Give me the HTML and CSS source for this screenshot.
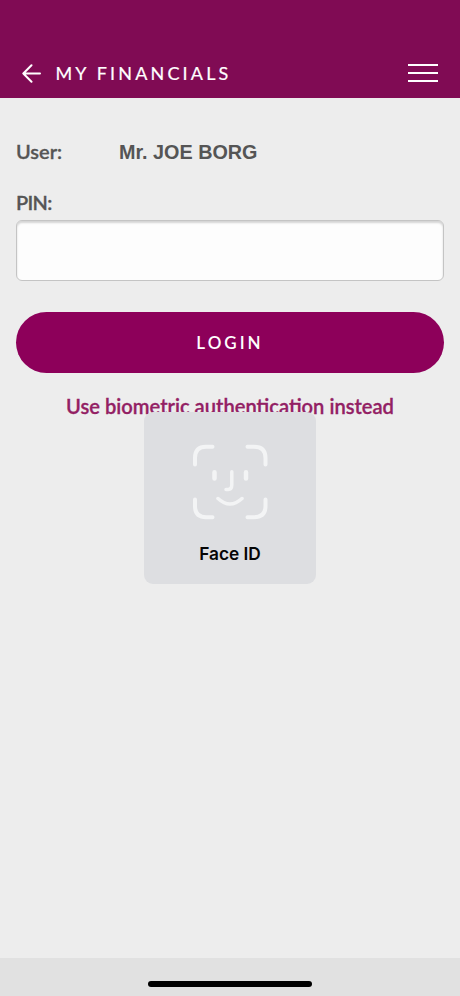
FILE: index.html
```html
<!DOCTYPE html>
<html lang="en">
<head>
<meta charset="utf-8">
<title>My Financials</title>
<link rel="stylesheet" href="styles.css">
</head>
<body>
<div class="screen">
  <header class="topbar">
    <svg class="back" width="20" height="20" viewBox="0 0 20 20"><path d="M9.500 2.300 1.300 10.500l8.200 8.200M1.300 10.500H18"/></svg>
    <h1 class="title">MY FINANCIALS</h1>
    <div class="menu"><i></i><i></i><i></i></div>
  </header>
  <main class="content">
    <div class="row"><span class="label">User:</span><span class="user">Mr. JOE BORG</span></div>
    <label class="label pin-label" for="pin">PIN:</label>
    <input class="pin" id="pin" type="password">
    <button class="login">LOGIN</button>
    <a class="biometric">Use biometric authentication instead</a>
  </main>
  <footer class="bottom"><div class="home"></div></footer>
  <div class="faceid">
    <svg width="76" height="76" viewBox="0 0 76 76">
      <path d="M3 20.500V14Q3 2.800 14 2.800h6.500M55.500 2.800H62Q73.500 2.800 73.500 14v6.500M73.500 55.500V62Q73.500 73.200 62 73.200h-6.500M20.500 73.200H14Q3 73.200 3 62v-6.500"/>
      <path class="eyes" d="M22.500 28.300v6.200M54 28.300v6.200"/>
      <path class="nose" d="M39.800 27.800v13Q39.800 45.500 36 45.500h-2"/>
      <path class="nose" d="M26 54.500Q38 65.500 50 54.500"/>
    </svg>
    <span class="faceid-text">Face ID</span>
  </div>
</div>
</body>
</html>
```
FILE: styles.css
```css
* { box-sizing: border-box; }
body { margin: 0; font-family: Lato, sans-serif; }
.screen {
  position: relative;
  display: flex;
  flex-direction: column;
  height: 996px;
  background: #ededed;
  overflow: hidden;
}
.topbar {
  display: flex;
  align-items: center;
  height: 98px;
  padding: 48px 22px 0;
  background: #800b54;
}
.back {
  fill: none;
  stroke: #fff;
  stroke-width: 2;
  stroke-linecap: round;
  stroke-linejoin: round;
}
.title {
  flex: 1;
  margin: 0 0 0 13.500px;
  font-size: 18px;
  line-height: 24px;
  font-weight: 400;
  letter-spacing: 3.150px;
  color: #fff;
  -webkit-text-stroke: 0.200px #fff;
}
.menu { display: flex; flex-direction: column; gap: 6px; width: 30px; }
.menu i { height: 2px; background: #fff; }
.content {
  flex: 1;
  display: flex;
  flex-direction: column;
  padding: 39px 16px 0;
}
.row { display: flex; height: 28px; }
.label {
  width: 103px;
  font-size: 20px;
  line-height: 28px;
  font-weight: 600;
  color: #555;
  -webkit-text-stroke: 0.300px #555;
}
.user { margin-top: 1px; font: bold 19.800px/28px "Liberation Sans", sans-serif; color: #555; }
.pin-label { margin-top: 23px; letter-spacing: -0.700px; }
.pin {
  height: 61px;
  margin: 4px 0 0;
  padding: 0 12px;
  border: 1px solid #c4c4c4;
  border-radius: 6px;
  background: #fdfdfd;
  box-shadow: inset 0 2px 2px #d4d4d4;
  outline: none;
}
.login {
  height: 61px;
  margin: 31px 0 0;
  padding: 0;
  border: 0;
  border-radius: 31px;
  background: #8d005a;
  color: #fff;
  font: 600 17px/24px Lato, sans-serif;
  letter-spacing: 3px;
}
.biometric {
  margin-top: 19px;
  text-align: center;
  font-size: 20.150px;
  line-height: 28px;
  font-weight: 600;
  color: #932064;
  -webkit-text-stroke: 0.300px #932064;
}
.bottom { height: 38px; padding-top: 23px; background: #e1e1e1; }
.home { width: 164px; height: 6px; margin: 0 auto; border-radius: 3px; background: #000; }
.faceid {
  position: absolute;
  left: 144px;
  top: 412px;
  display: flex;
  flex-direction: column;
  align-items: center;
  width: 172px;
  height: 172px;
  padding-top: 32px;
  border-radius: 9px;
  background: #dddee1;
}
.faceid svg { fill: none; stroke: #f3f4f5; stroke-width: 4; stroke-linecap: round; }
.faceid .eyes { stroke-width: 4.500; }
.faceid .nose { stroke-width: 3.500; }
.faceid-text { margin-top: 22px; font: 600 17.300px/24px Inter, sans-serif; color: #050505; }
```
